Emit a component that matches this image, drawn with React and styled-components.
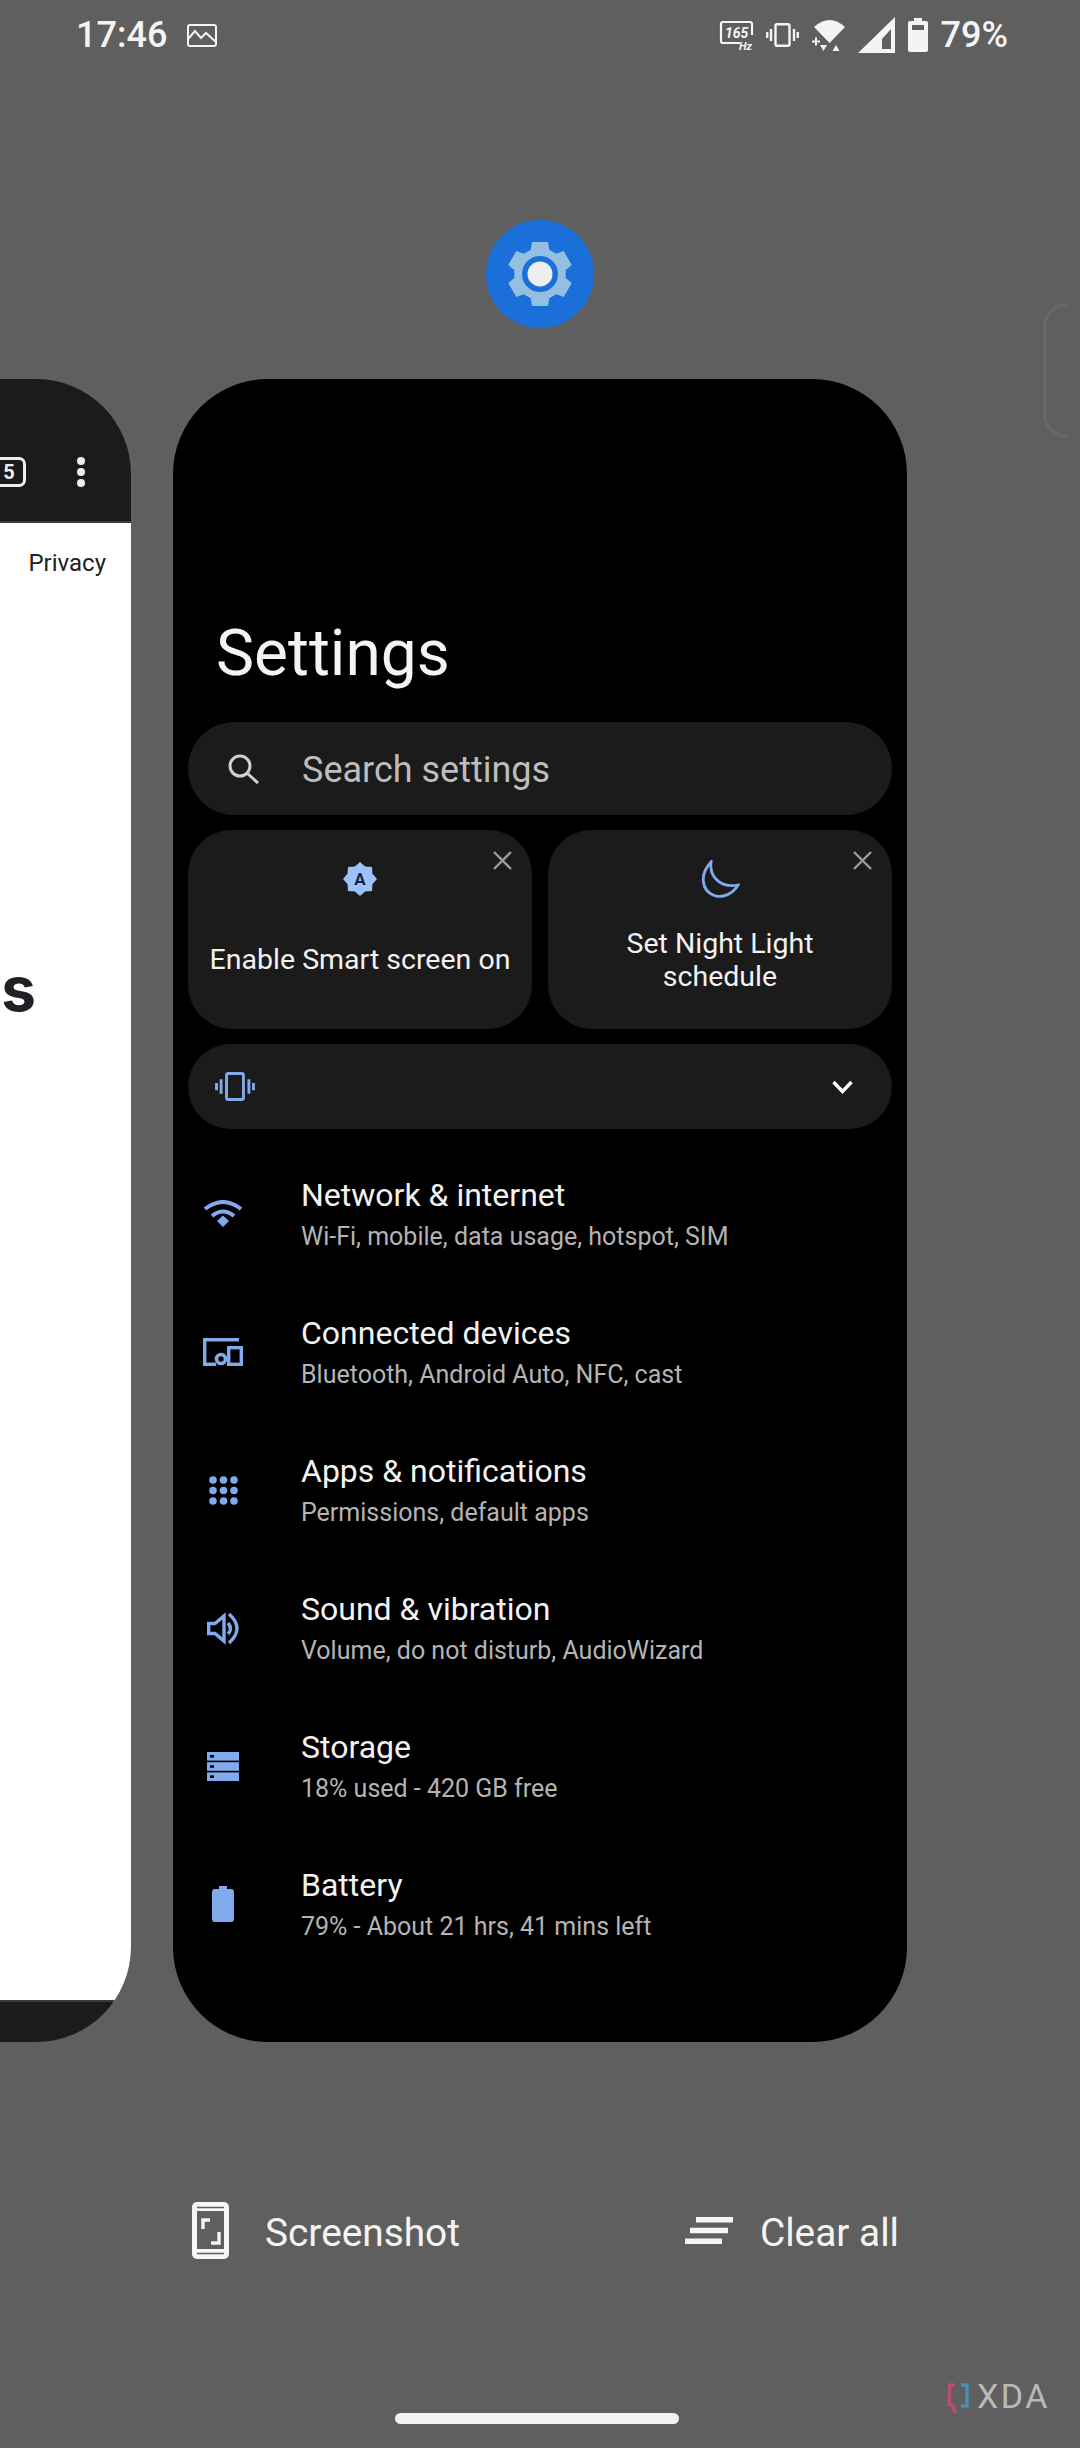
import styled, { createGlobalStyle } from "styled-components";

const BLUE = "#80aaec";

const GlobalStyle = createGlobalStyle`
  html, body {
    margin: 0;
    padding: 0;
    background: #5f5f5f;
  }
  * {
    box-sizing: border-box;
  }
`;

const Page = styled.div`
  position: relative;
  width: 1080px;
  height: 2448px;
  overflow: hidden;
  display: flex;
  flex-direction: column;
  align-items: center;
  background: #5f5f5f;
  font-family: Roboto, "Liberation Sans", sans-serif;
  color: #fff;
`;

const StatusBar = styled.div`
  width: 100%;
  height: 70px;
  padding: 0 72px 0 76px;
  display: flex;
  align-items: center;
  justify-content: space-between;
  font-size: 36px;
  font-weight: 500;
  color: #f4f4f4;
`;
const StatusGroup = styled.div`
  display: flex;
  align-items: center;
  gap: ${(p) => p.$gap}px;
`;
const StatusText = styled.span`
  line-height: 70px;
`;
const HzSvg = styled.svg`
  overflow: visible;
`;

const AppIcon = styled.div`
  width: 108px;
  height: 108px;
  margin-top: 150px;
  border-radius: 50%;
  background: #1b6fd9;
  display: flex;
  align-items: center;
  justify-content: center;
`;

const Carousel = styled.div`
  position: relative;
  width: 100%;
  height: 1663px;
  margin-top: 51px;
  display: flex;
  gap: 42px;
`;
const Edge = styled.div`
  position: absolute;
  left: 1043px;
  top: -76px;
  width: 24px;
  height: 135px;
  border: 3px solid rgba(255, 255, 255, 0.06);
  border-right: 0;
  border-radius: 30px 0 0 30px;
`;

const BrowserCard = styled.div`
  flex: 0 0 733px;
  margin-left: -602px;
  border-radius: 95px;
  overflow: hidden;
  display: flex;
  flex-direction: column;
  background: #1b1b1b;
`;
const BrowserBar = styled.div`
  height: 144px;
  padding: 78px 46px 0 0;
  display: flex;
  justify-content: flex-end;
  gap: 51px;
  border-bottom: 2px solid #3a3a3a;
`;
const TabCount = styled.div`
  width: 34px;
  height: 30px;
  border: 3px solid #eee;
  border-radius: 7px;
  display: flex;
  align-items: center;
  justify-content: center;
  font-size: 20px;
  font-weight: 700;
  color: #eee;
`;
const MenuDots = styled.div`
  height: 30px;
  display: flex;
  flex-direction: column;
  justify-content: space-between;
`;
const MenuDot = styled.span`
  width: 8px;
  height: 8px;
  border-radius: 50%;
  background: #eee;
`;
const BrowserPage = styled.div`
  flex: 1;
  background: #fff;
  border-bottom: 2px solid #3a3a3a;
  color: #202124;
  text-align: right;
`;
const PageLink = styled.div`
  margin-top: 23px;
  padding-right: 25px;
  font-size: 24px;
  line-height: 34px;
`;
const PageHeading = styled.div`
  margin-top: 374px;
  padding-right: 95px;
  font-family: Inter, Roboto, sans-serif;
  font-size: 62px;
  font-weight: 700;
  line-height: 70px;
`;
const BrowserFoot = styled.div`
  height: 40px;
`;

const SettingsCard = styled.div`
  flex: 0 0 734px;
  padding: 0 15px;
  border-radius: 95px;
  background: #000;
`;
const Title = styled.h1`
  margin: 238px 0 0;
  padding-left: 28px;
  height: 105px;
  font-size: 64px;
  font-weight: 400;
  line-height: 74px;
  color: #f4f4f4;
`;
const SearchBar = styled.div`
  height: 93px;
  border-radius: 47px;
  background: #1b1b1b;
  display: flex;
  align-items: center;
  padding-left: 40px;
  gap: 42px;
  font-size: 36px;
  color: #bdbdbd;
`;
const SearchText = styled.span`
  padding-top: 3px;
`;
const ChipRow = styled.div`
  margin-top: 15px;
  display: grid;
  grid-template-columns: 344px 344px;
  gap: 16px;
`;
const Chip = styled.div`
  position: relative;
  height: 199px;
  padding-top: 29px;
  border-radius: 44px;
  background: #1b1b1b;
  display: flex;
  flex-direction: column;
  align-items: center;
`;
const ChipIcon = styled.div`
  height: 40px;
  display: flex;
  align-items: center;
`;
const ChipLabel = styled.div`
  flex: 1;
  display: flex;
  align-items: center;
  padding-bottom: 9px;
  font-size: 28.5px;
  line-height: 33px;
  text-align: center;
  color: #f2f2f2;
`;
const ChipClose = styled.div`
  position: absolute;
  top: 21px;
  right: 20px;
  display: flex;
`;
const SoundBar = styled.div`
  margin-top: 15px;
  height: 85px;
  border-radius: 43px;
  background: #1b1b1b;
  padding: 0 39px 0 27px;
  display: flex;
  align-items: center;
  justify-content: space-between;
`;

const List = styled.div`
  margin-top: 16px;
`;
const Row = styled.div`
  height: 138px;
  padding-left: 11px;
  display: flex;
  align-items: center;
  gap: 54px;
`;
const RowIcon = styled.div`
  flex: 0 0 48px;
  display: flex;
  justify-content: center;
`;
const RowText = styled.div`
  padding-top: 3px;
`;
const RowTitle = styled.div`
  font-size: 32px;
  line-height: 43.5px;
  color: #f2f2f2;
`;
const RowSub = styled.div`
  font-size: 25px;
  line-height: 40px;
  color: #b4b4b4;
`;

const Actions = styled.div`
  width: 100%;
  height: 60px;
  margin-top: 158px;
  padding: 0 181px 0 192px;
  display: flex;
  justify-content: space-between;
  align-items: center;
`;
const Action = styled.div`
  display: flex;
  align-items: center;
  gap: ${(p) => p.$gap}px;
  font-size: 38.8px;
  color: #f4f4f4;
`;
const ActionText = styled.span`
  padding-top: 5px;
`;
const HomeBar = styled.div`
  width: 284px;
  height: 11px;
  margin-top: 153px;
  margin-right: 6px;
  border-radius: 6px;
  background: #f2f2f2;
`;
const Watermark = styled.div`
  position: absolute;
  left: 947px;
  top: 2378px;
  display: flex;
  align-items: center;
  gap: 8px;
  font-size: 34px;
  line-height: 36px;
  letter-spacing: 2.5px;
  color: #b9b9b9;
`;

// n spikes around a centre, radii alternate, used for the gear and the A badge
const ring = (n, cx, cy, points) => {
  const out = [];
  for (let i = 0; i < n; i++) {
    const base = (360 / n) * i - 90;
    points.forEach(([off, r]) => {
      const a = ((base + off) * Math.PI) / 180;
      out.push(`${(cx + r * Math.cos(a)).toFixed(2)},${(cy + r * Math.sin(a)).toFixed(2)}`);
    });
  }
  return out.join(" ");
};

const Gear = () => (
  <svg width="68" height="68" viewBox="0 0 68 68">
    <polygon
      fill="#93c0e2"
      points={ring(6, 34, 34, [
        [-14, 33],
        [14, 33],
        [21, 26],
        [39, 26],
      ])}
    />
    <circle cx="34" cy="34" r="18" fill="#1b6fd9" />
    <circle cx="34" cy="34" r="12.5" fill="#eeeeee" />
  </svg>
);

const PictureIcon = () => (
  <svg width="30" height="23" viewBox="0 0 30 23" fill="none" stroke="#f4f4f4" strokeWidth="2">
    <rect x="1" y="1" width="28" height="21" rx="2" />
    <path d="M1 15 L8 7 L14 14 L19 9 L29 18" />
  </svg>
);
const HzIcon = () => (
  <HzSvg width="33" height="29" viewBox="0 0 33 29" fill="none">
    <path d="M20 22 H3 Q1 22 1 20 V3 Q1 1 3 1 H30 Q32 1 32 3 V14" stroke="#f4f4f4" strokeWidth="2.2" />
    <text x="5" y="17" fontFamily="Roboto" fontStyle="italic" fontWeight="700" fontSize="14" fill="#f4f4f4">165</text>
    <text x="19" y="28.5" fontFamily="Roboto" fontStyle="italic" fontWeight="700" fontSize="11" fill="#f4f4f4">Hz</text>
  </HzSvg>
);
const VibrateIcon = ({ color = "#f4f4f4", w = 33, h = 24 }) => (
  <svg width={w} height={h} viewBox="0 0 33 24" fill="none">
    <rect x="9.5" y="1.2" width="14" height="21.6" rx="1.5" stroke={color} strokeWidth="2.4" />
    <path d="M5 6 V18 M1.2 9 V15 M28 6 V18 M31.8 9 V15" stroke={color} strokeWidth="2.4" />
  </svg>
);
const WifiIcon = () => (
  <svg width="33" height="33" viewBox="0 0 33 33" fill="#f4f4f4">
    <path d="M2 8 Q17.5 -6 33 8 L17.5 24 Z" />
    <path d="M0 21.5 H8 V23.5 H0 Z M3 18.5 H5 V26.5 H3 Z" />
    <path d="M8 26 H15 L11.5 32 Z M24 26 L27.5 32 H20.5 Z" />
  </svg>
);
const SignalIcon = () => (
  <svg width="37" height="36" viewBox="0 0 37 36" fill="#f4f4f4">
    <path fillRule="evenodd" d="M0 36 L37 0 V36 Z M24 22 V32 H33 V12 Z" />
  </svg>
);
const BatteryIcon = () => (
  <svg width="20" height="34" viewBox="0 0 20 34" fill="#f4f4f4">
    <path fillRule="evenodd" d="M6 0 H14 V3 H18 Q20 3 20 5 V32 Q20 34 18 34 H2 Q0 34 0 32 V5 Q0 3 2 3 H6 Z M4 7 V12 H16 V7 Z" />
  </svg>
);

const SearchIcon = () => (
  <svg width="32" height="30" viewBox="0 0 32 30" fill="none" stroke="#d0d0d0" strokeWidth="3">
    <circle cx="12" cy="12" r="10" />
    <path d="M19 19 L30 29" />
  </svg>
);
const CloseIcon = () => (
  <svg width="19" height="19" viewBox="0 0 19 19" stroke="#9c9c9c" strokeWidth="2.4">
    <path d="M1 1 L18 18 M18 1 L1 18" />
  </svg>
);
const BadgeIcon = () => (
  <svg width="34" height="34" viewBox="0 0 34 34">
    <polygon
      fill="#9cc2fc"
      points={ring(8, 17, 17, [
        [0, 17],
        [22.5, 13.5],
      ])}
    />
    <text x="17" y="23" textAnchor="middle" fontFamily="Roboto" fontWeight="700" fontSize="17" fill="#14233f">A</text>
  </svg>
);
const MoonIcon = () => (
  <svg width="40" height="38" viewBox="0 0 40 38" fill="none" stroke={BLUE} strokeWidth="2.8">
    <path d="M11 2 C-1 15 2 30 13 35 C22 39 33 34 38 25 C24 28 9 20 11 2 Z" />
  </svg>
);
const ChevronIcon = () => (
  <svg width="21" height="14" viewBox="0 0 21 14" fill="none" stroke="#fff" strokeWidth="3.4">
    <path d="M1.5 2 L10.5 11.5 L19.5 2" />
  </svg>
);

const NetIcon = () => (
  <svg width="40" height="28" viewBox="0 0 40 28" fill="none" stroke={BLUE} strokeWidth="4">
    <path d="M2 9 Q20 -5 38 9" />
    <path d="M9 16 Q20 7 31 16" />
    <path d="M14 21 L20 15.5 L26 21 L20 27 Z" fill={BLUE} stroke="none" />
  </svg>
);
const DevicesIcon = () => (
  <svg width="40" height="28" viewBox="0 0 40 28" fill="none" stroke={BLUE} strokeWidth="3.4">
    <path d="M36 1.7 H1.7 V26.3 H13" />
    <rect x="25.7" y="9.7" width="12.6" height="16.6" />
    <circle cx="18" cy="21" r="4.5" strokeWidth="3.6" />
  </svg>
);
const AppsIcon = () => (
  <svg width="29" height="29" viewBox="0 0 29 29" fill={BLUE}>
    {[4, 14.5, 25].flatMap((y) =>
      [4, 14.5, 25].map((x) => <circle key={`${x}-${y}`} cx={x} cy={y} r="3.8" />)
    )}
  </svg>
);
const SoundIcon = () => (
  <svg width="32" height="33" viewBox="0 0 32 33" fill="none" stroke={BLUE} strokeWidth="3.4">
    <path d="M1.7 11.5 H8 L17 4 V29 L8 21.5 H1.7 Z" />
    <path d="M21 11 Q26 16.5 21 22" />
    <path d="M22 2 Q38 16.5 22 31" />
  </svg>
);
const StorageIcon = () => (
  <svg width="32" height="29" viewBox="0 0 32 29" fill={BLUE}>
    {[0, 10.2, 20.4].map((y) => (
      <g key={y}>
        <rect x="0" y={y} width="32" height="8.6" />
        <rect x="3" y={y + 3} width="4" height="2.6" fill="#000" />
      </g>
    ))}
  </svg>
);
const RowBatteryIcon = () => (
  <svg width="22" height="36" viewBox="0 0 22 36" fill={BLUE}>
    <path d="M7 0 H15 V3 H19 Q22 3 22 6 V33 Q22 36 19 36 H3 Q0 36 0 33 V6 Q0 3 3 3 H7 Z" />
  </svg>
);

const ScreenshotIcon = () => (
  <svg width="37" height="57" viewBox="0 0 37 57">
    <rect width="37" height="57" rx="5" fill="#f6f6f6" />
    <path d="M5 5.5 H32 M5 51.5 H32" stroke="#5f5f5f" strokeWidth="1.6" />
    <rect x="5" y="9" width="27" height="38" fill="#5f5f5f" />
    <path d="M18 18 H11 V27 M19 41 H27 V30" fill="none" stroke="#f6f6f6" strokeWidth="3.4" />
  </svg>
);
const ClearIcon = () => (
  <svg width="48" height="27" viewBox="0 0 48 27" fill="#f6f6f6">
    <path d="M11 0 H48 V5.5 H11 Z M5 10.7 H43 V16.2 H5 Z M0 21.4 H37 V27 H0 Z" />
  </svg>
);
const XdaBrackets = () => (
  <svg width="22" height="36" viewBox="0 0 22 36" fill="none" strokeWidth="3.4">
    <path d="M8 7 H2.5 V27 H6 L8 35" stroke="#b4506c" />
    <path d="M14 7 H20 V28 H14" stroke="#4a8fb8" />
  </svg>
);

const rows = [
  { title: "Network & internet", sub: "Wi-Fi, mobile, data usage, hotspot, SIM", Icon: NetIcon },
  { title: "Connected devices", sub: "Bluetooth, Android Auto, NFC, cast", Icon: DevicesIcon },
  { title: "Apps & notifications", sub: "Permissions, default apps", Icon: AppsIcon },
  { title: "Sound & vibration", sub: "Volume, do not disturb, AudioWizard", Icon: SoundIcon },
  { title: "Storage", sub: "18% used - 420 GB free", Icon: StorageIcon },
  { title: "Battery", sub: "79% - About 21 hrs, 41 mins left", Icon: RowBatteryIcon },
];

export default function App() {
  return (
    <Page>
      <GlobalStyle />
      <StatusBar>
        <StatusGroup $gap={20}>
          <StatusText>17:46</StatusText>
          <PictureIcon />
        </StatusGroup>
        <StatusGroup $gap={13}>
          <HzIcon />
          <VibrateIcon />
          <WifiIcon />
          <SignalIcon />
          <BatteryIcon />
          <StatusText>79%</StatusText>
        </StatusGroup>
      </StatusBar>

      <AppIcon>
        <Gear />
      </AppIcon>

      <Carousel>
        <Edge />
        <BrowserCard>
          <BrowserBar>
            <TabCount>5</TabCount>
            <MenuDots>
              <MenuDot />
              <MenuDot />
              <MenuDot />
            </MenuDots>
          </BrowserBar>
          <BrowserPage>
            <PageLink>Privacy</PageLink>
            <PageHeading>s</PageHeading>
          </BrowserPage>
          <BrowserFoot />
        </BrowserCard>

        <SettingsCard>
          <Title>Settings</Title>
          <SearchBar>
            <SearchIcon />
            <SearchText>Search settings</SearchText>
          </SearchBar>
          <ChipRow>
            <Chip>
              <ChipClose>
                <CloseIcon />
              </ChipClose>
              <ChipIcon>
                <BadgeIcon />
              </ChipIcon>
              <ChipLabel>Enable Smart screen on</ChipLabel>
            </Chip>
            <Chip>
              <ChipClose>
                <CloseIcon />
              </ChipClose>
              <ChipIcon>
                <MoonIcon />
              </ChipIcon>
              <ChipLabel>
                Set Night Light
                <br />
                schedule
              </ChipLabel>
            </Chip>
          </ChipRow>
          <SoundBar>
            <VibrateIcon color={BLUE} w={40} h={29} />
            <ChevronIcon />
          </SoundBar>
          <List>
            {rows.map(({ title, sub, Icon }) => (
              <Row key={title}>
                <RowIcon>
                  <Icon />
                </RowIcon>
                <RowText>
                  <RowTitle>{title}</RowTitle>
                  <RowSub>{sub}</RowSub>
                </RowText>
              </Row>
            ))}
          </List>
        </SettingsCard>
      </Carousel>

      <Actions>
        <Action $gap={36}>
          <ScreenshotIcon />
          <ActionText>Screenshot</ActionText>
        </Action>
        <Action $gap={27}>
          <ClearIcon />
          <ActionText>Clear all</ActionText>
        </Action>
      </Actions>
      <HomeBar />
      <Watermark>
        <XdaBrackets />
        XDA
      </Watermark>
    </Page>
  );
}
